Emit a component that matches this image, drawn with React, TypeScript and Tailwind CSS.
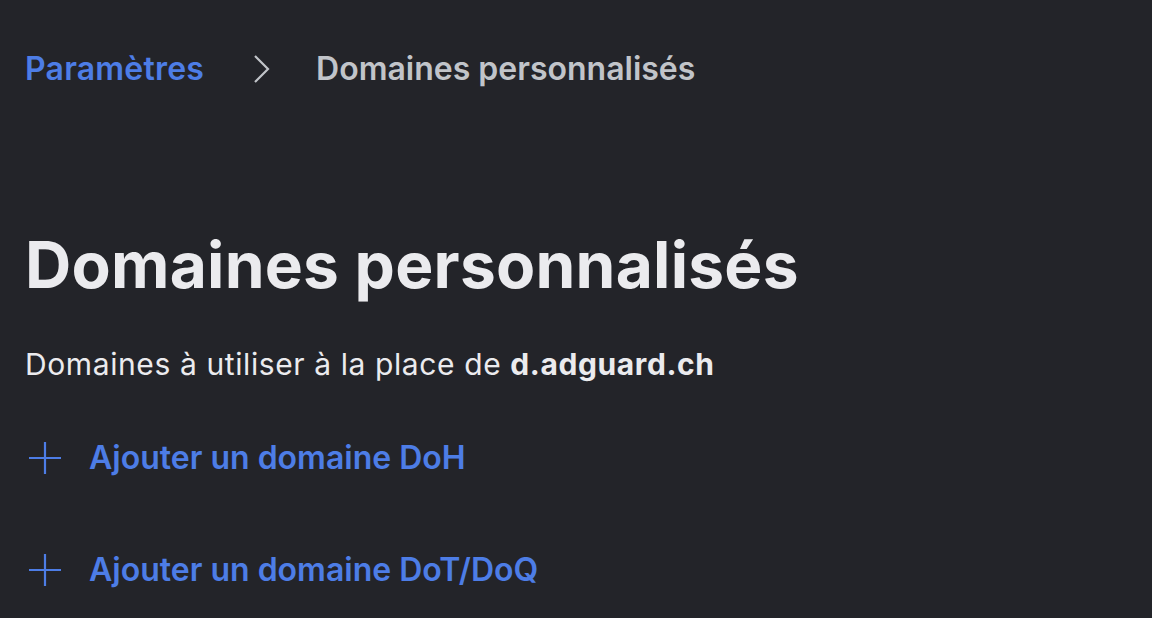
const font = { fontFamily: "Inter, 'Noto Sans', sans-serif" };

function AddLink({ label }: { label: string }) {
  return (
    <button className="flex items-center h-[40px] text-[#4d7de6]">
      <svg className="ml-[4px] mr-[28px]" width="32" height="32" viewBox="0 0 32 32" fill="none" stroke="currentColor" strokeWidth="2.2">
        <path d="M16 0v32M0 16h32" />
      </svg>
      <span className="text-[32px] font-semibold">{label}</span>
    </button>
  );
}

export default function App() {
  return (
    <div className="min-h-screen w-full bg-[#232429] text-[#ebebee] pl-[25px]" style={font}>
      <nav className="flex items-center pt-[48px] h-[90px] text-[32px] font-semibold">
        <span className="text-[#4d7de6] tracking-[0.2px]">Paramètres</span>
        <svg className="ml-[48px] mr-[44px]" width="20" height="30" viewBox="0 0 20 30" fill="none" stroke="#c1c4c9" strokeWidth="2.2">
          <path d="M3 2l13 13L3 28" />
        </svg>
        <span className="text-[#c1c4c9]">Domaines personnalisés</span>
      </nav>
      <h1 className="mt-[140px] text-[64px] leading-[70px] font-bold tracking-[0.25px]">Domaines personnalisés</h1>
      <p className="mt-[46px] text-[30px] leading-[36px] tracking-[0.6px]">
        Domaines à utiliser à la place de <b className="font-bold">d.adguard.ch</b>
      </p>
      <div className="mt-[56px] flex flex-col gap-[72px]">
        <AddLink label="Ajouter un domaine DoH" />
        <AddLink label="Ajouter un domaine DoT/DoQ" />
      </div>
    </div>
  );
}
